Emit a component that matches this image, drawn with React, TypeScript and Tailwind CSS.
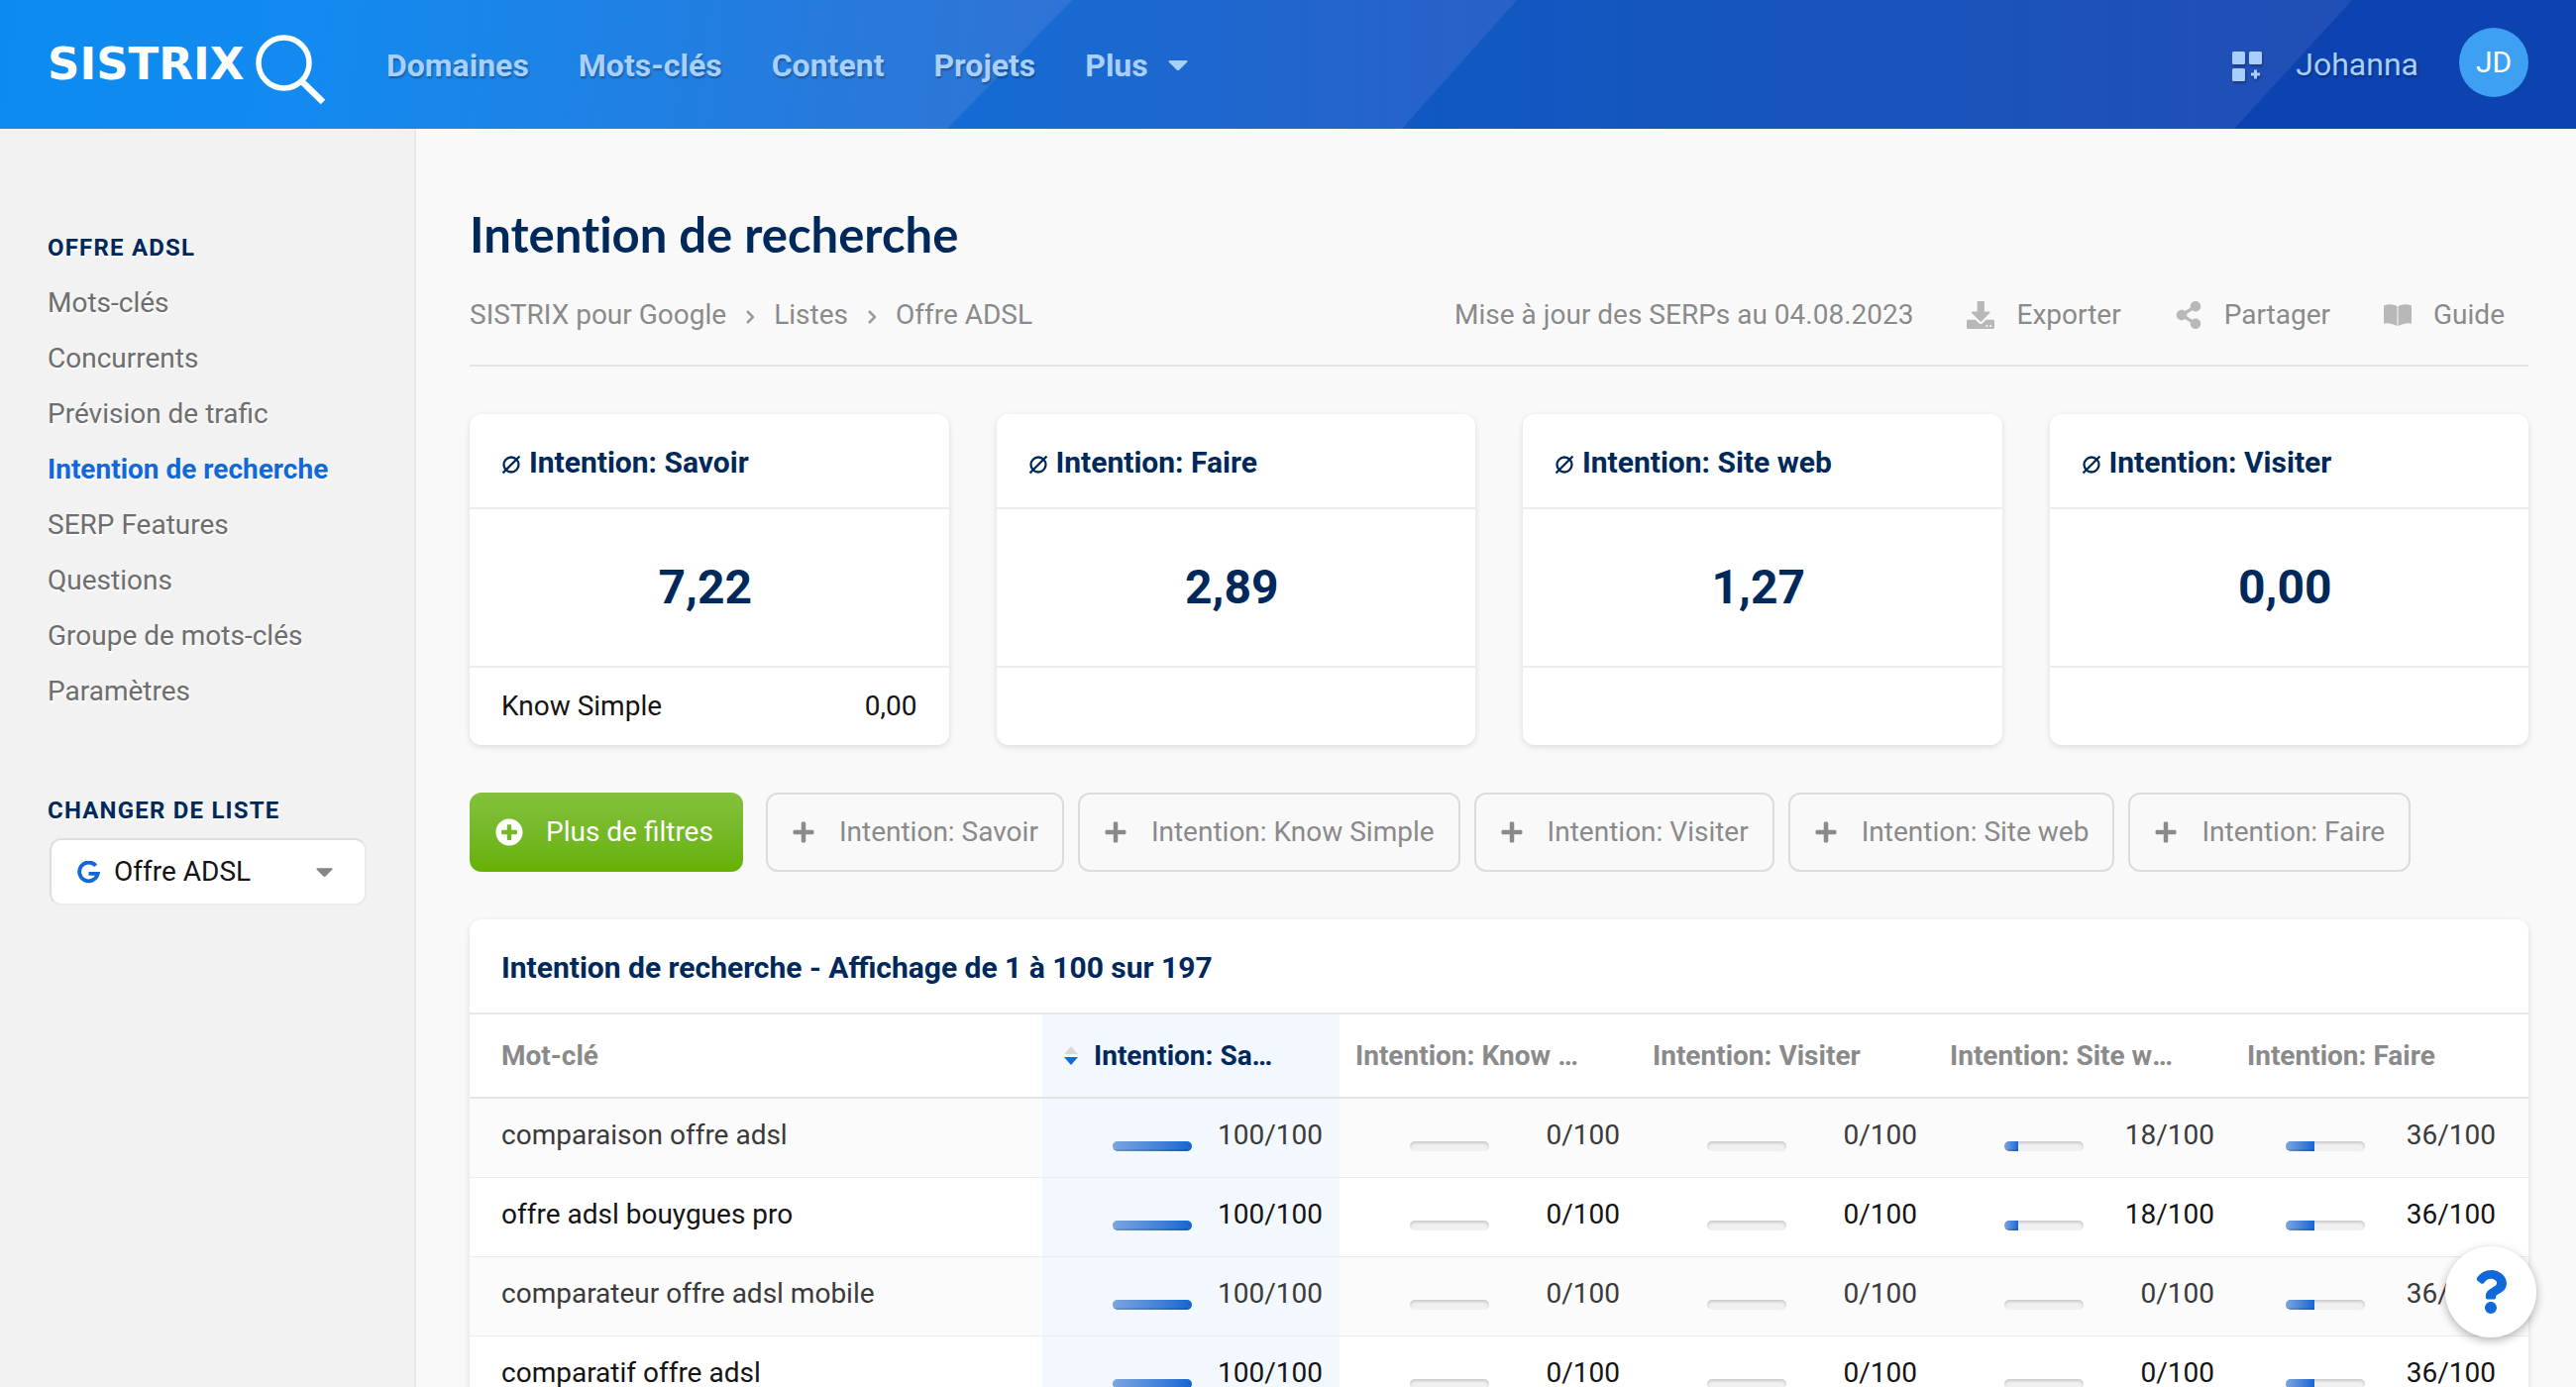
import { FaShareAlt, FaPlusCircle, FaPlus, FaQuestion } from 'react-icons/fa'

const nav = ['Domaines', 'Mots-clés', 'Content', 'Projets']
const side = ['Mots-clés', 'Concurrents', 'Prévision de trafic', 'Intention de recherche', 'SERP Features', 'Questions', 'Groupe de mots-clés', 'Paramètres']
const cards = [
  { title: 'Intention: Savoir', value: '7,22', label: 'Know Simple', extra: '0,00' },
  { title: 'Intention: Faire', value: '2,89' },
  { title: 'Intention: Site web', value: '1,27' },
  { title: 'Intention: Visiter', value: '0,00' },
]
const filters = ['Savoir', 'Know Simple', 'Visiter', 'Site web', 'Faire']
const columns = ['Intention: Know Simple', 'Intention: Visiter', 'Intention: Site web', 'Intention: Faire']
const rows: { keyword: string; scores: number[] }[] = [
  { keyword: 'comparaison offre adsl', scores: [100, 0, 0, 18, 36] },
  { keyword: 'offre adsl bouygues pro', scores: [100, 0, 0, 18, 36] },
  { keyword: 'comparateur offre adsl mobile', scores: [100, 0, 0, 0, 36] },
  { keyword: 'comparatif offre adsl', scores: [100, 0, 0, 0, 36] },
]

function Caret({ className }: { className: string }) {
  return (
    <svg viewBox="0 0 20 10" className={className} fill="currentColor" aria-hidden="true">
      <path d="M1.5 0h17a1 1 0 0 1 .7 1.7l-7.6 7.6a2.2 2.2 0 0 1-3.2 0L.8 1.7A1 1 0 0 1 1.5 0z" />
    </svg>
  )
}

function Logo() {
  return (
    <a href="#" aria-label="SISTRIX" className="flex w-[294px] items-center gap-3 text-white">
      <span className="font-['DejaVu_Sans',sans-serif] text-[45px] leading-[64px] font-bold">SISTRIX</span>
      <svg viewBox="0 0 72 72" className="mt-3 h-[72px] w-[72px] shrink-0" fill="none" stroke="currentColor" aria-hidden="true">
        <circle cx="28.5" cy="28.5" r="25.5" strokeWidth="5.5" />
        <path d="M46.5 47l21.5 21" strokeWidth="6.5" />
      </svg>
    </a>
  )
}

function Header() {
  return (
    <header className="relative isolate flex h-[130px] items-center overflow-hidden bg-[#0d42b1] pr-12 pl-12 text-[#a9cffc]">
      <svg viewBox="0 0 2600 130" preserveAspectRatio="none" className="absolute inset-0 -z-10 h-full w-full" aria-hidden="true">
        <defs>
          <linearGradient id="near" gradientUnits="userSpaceOnUse" x1="0" y1="0" x2="1050" y2="130">
            <stop offset="0" stopColor="#0b8bf0" />
            <stop offset="0.3" stopColor="#138af0" />
            <stop offset="1" stopColor="#2f74d4" />
          </linearGradient>
          <linearGradient id="middle" gradientUnits="userSpaceOnUse" x1="950" y1="0" x2="1500" y2="0">
            <stop offset="0" stopColor="#146cd4" />
            <stop offset="1" stopColor="#2862c8" />
          </linearGradient>
          <linearGradient id="far" gradientUnits="userSpaceOnUse" x1="1420" y1="0" x2="2350" y2="0">
            <stop offset="0" stopColor="#1059c2" />
            <stop offset="1" stopColor="#214fb6" />
          </linearGradient>
        </defs>
        <path fill="#0d42b1" d="M0 0h2600v130H0z" />
        <path fill="url(#far)" d="M0 0h2374l-119 130H0z" />
        <path fill="url(#middle)" d="M0 0h1531l-116 130H0z" />
        <path fill="url(#near)" d="M0 0h1082L956 130H0z" />
      </svg>
      <Logo />
      <nav aria-label="Principal" className="mt-0.5 ml-12 flex items-center gap-[50px] text-[32px] leading-10 font-bold [text-shadow:1px_2px_2px_rgba(0,0,0,0.3)]">
        {nav.map((n) => (
          <a key={n} href="#">{n}</a>
        ))}
        <button type="button" className="flex items-center gap-5">
          Plus
          <Caret className="h-[10px] w-5" />
        </button>
      </nav>
      <div className="ml-auto flex items-center">
        <button type="button" aria-label="Applications" className="mt-1 mr-[34px]">
          <svg viewBox="0 0 30 30" className="h-[30px] w-[30px] drop-shadow-[1px_2px_1px_rgba(0,0,0,0.3)]" fill="currentColor" aria-hidden="true">
            <rect width="13" height="13" rx="1.5" />
            <rect x="17" width="13" height="13" rx="1.5" />
            <rect y="17" width="13" height="13" rx="1.5" />
            <path d="M22 18.5h3v3h3v3h-3v3h-3v-3h-3v-3h3z" />
          </svg>
        </button>
        <a href="#" className="mr-[41px] text-[32px] leading-10 [text-shadow:1px_2px_2px_rgba(0,0,0,0.3)]">Johanna</a>
        <button type="button" className="mb-1 h-[70px] w-[70px] rounded-full bg-[#3ea0f2] text-[30px] leading-[68px] text-white">JD</button>
      </div>
    </header>
  )
}

function Sidebar() {
  return (
    <aside className="w-[420px] shrink-0 border-r-2 border-[#e8e8e8] bg-[#f2f2f2] px-12 pt-[100px] [text-shadow:1px_2px_0_#fff]">
      <h2 className="mb-2 text-2xl leading-10 font-bold tracking-wider text-[#00295b]">OFFRE ADSL</h2>
      <ul className="text-[28px] leading-[56px] text-[#6e6e6e]">
        {side.map((s) => (
          <li key={s}>
            <a href="#" className={s === 'Intention de recherche' ? 'font-bold text-[#1168d8]' : ''}>{s}</a>
          </li>
        ))}
      </ul>
      <label htmlFor="list" className="mt-16 block text-2xl leading-[56px] font-bold tracking-wider text-[#00295b]">CHANGER DE LISTE</label>
      <div className="ml-0.5 flex h-[68px] items-center rounded-xl border-2 border-[#ebebeb] border-t-[#dedede] border-l-[#dedede] bg-white pr-8 pl-[26px] [text-shadow:none]">
        <svg viewBox="0 0 24 24" className="h-[23px] w-[23px] shrink-0" fill="none" stroke="#1168d8" strokeWidth="4" aria-hidden="true">
          <path d="M19.5 5A9.8 9.8 0 1 0 21.6 13.5H12" />
        </svg>
        <select id="list" className="min-w-0 flex-1 appearance-none bg-transparent pl-[14px] text-[28px] leading-10 text-[#141414]">
          <option>Offre ADSL</option>
        </select>
        <Caret className="h-[9px] w-[17px] text-[#858585]" />
      </div>
    </aside>
  )
}

function PageHead() {
  const actions = [
    {
      label: 'Exporter',
      icon: (
        <svg viewBox="0 0 29 29" className="h-7 w-7" fill="#b8b8b8" aria-hidden="true">
          <path d="M12 0h5.5a1 1 0 0 1 1 1v10h5c1 0 1.2.8.6 1.400l-8.400 8.500a1.300 1.300 0 0 1-1.900 0l-8.400-8.500C4.800 11.800 5 11 6 11h5V1a1 1 0 0 1 1-1z" />
          <path fillRule="evenodd" d="M1.200 19.500h8l3 3a3.500 3.500 0 0 0 5 0l3-3h7.600a1.200 1.200 0 0 1 1.200 1.200v7.100a1.200 1.200 0 0 1-1.200 1.200H1.200A1.200 1.200 0 0 1 0 27.800v-7.100a1.200 1.200 0 0 1 1.200-1.200zM20 25v2h2v-2zm4 0v2h2v-2z" />
        </svg>
      ),
    },
    { label: 'Partager', icon: <FaShareAlt className="h-7 w-7 text-[#b8b8b8]" /> },
    {
      label: 'Guide',
      icon: (
        <svg viewBox="0 0 28 22" className="h-[22px] w-7" fill="#b8b8b8" aria-hidden="true">
          <path d="M0 1.500Q7-1 13.500 2v20Q7 18.500 0 19.500zM28 1.500Q21-1 14.500 2v20q6.500-3.500 13.500-2.500z" />
        </svg>
      ),
    },
  ]
  return (
    <>
      <h1 className="font-['Lato',sans-serif] text-[49px] leading-[60px] font-bold text-[#00295b] [font-variant-ligatures:none]">Intention de recherche</h1>
      <div className="mt-8 flex items-center justify-between border-b-2 border-[#e4e4e4] pb-[30px] text-[28px] leading-10 text-[#8a8a8a]">
        <nav aria-label="Fil d’Ariane" className="flex items-center gap-5">
          {['SISTRIX pour Google', 'Listes', 'Offre ADSL'].map((c, i) => (
            <span key={c} className="flex items-center gap-5">
              {i > 0 && (
                <svg viewBox="0 0 8 14" className="mt-1 h-[14px] w-2" fill="none" stroke="#9a9a9a" strokeWidth="2.5" aria-hidden="true">
                  <path d="M1 1l6 6-6 6" />
                </svg>
              )}
              <a href="#">{c}</a>
            </span>
          ))}
        </nav>
        <div className="flex items-center gap-[54px] pr-6 [text-shadow:1px_2px_0_#fff]">
          <span>Mise à jour des SERPs au 04.08.2023</span>
          {actions.map((a) => (
            <button key={a.label} type="button" className="flex items-center gap-[22px]">
              {a.icon}
              {a.label}
            </button>
          ))}
        </div>
      </div>
    </>
  )
}

function Cards() {
  return (
    <section className="mt-12 grid grid-cols-4 gap-12">
      {cards.map((c) => (
        <article key={c.title} className="rounded-xl bg-white shadow-[0_2px_6px_rgba(0,0,0,0.12)]">
          <h2 className="flex h-24 items-center gap-2 border-b-2 border-[#ececec] px-8 pt-1 text-[30px] leading-10 font-bold text-[#00295b]">
            <svg viewBox="0 0 20 20" className="mt-1 h-5 w-5" fill="none" stroke="currentColor" strokeWidth="2.3" aria-hidden="true">
              <circle cx="10" cy="10" r="7.5" />
              <path d="M1.5 18.5l17-17" />
            </svg>
            {c.title}
          </h2>
          <p className="flex h-40 items-center justify-center border-b-2 border-[#ececec] pr-2 text-5xl font-bold text-[#00295b]">{c.value}</p>
          <div className="flex h-[78px] items-center justify-between px-8 text-[28px] leading-10 text-[#141414]">
            <span>{c.label}</span>
            <span>{c.extra}</span>
          </div>
        </article>
      ))}
    </section>
  )
}

function Filters() {
  return (
    <section className="mt-12 flex gap-[14px] text-[28px] leading-10 text-[#8a8a8a]">
      <button type="button" className="mr-[9px] flex h-20 items-center gap-[23px] rounded-xl bg-linear-to-b from-[#84c03c] to-[#66b100] pr-[30px] pl-[26px] text-white">
        <FaPlusCircle className="h-7 w-7" />
        Plus de filtres
      </button>
      {filters.map((f) => (
        <button key={f} type="button" className="flex h-20 items-center gap-6 rounded-xl border-2 border-[#dcdcdc] px-6">
          <FaPlus className="h-6 w-6" />
          Intention: {f}
        </button>
      ))}
    </section>
  )
}

function Bar({ value }: { value: number }) {
  return (
    <span className="mt-[22px] block h-[10px] w-20 overflow-hidden rounded-[5px] bg-[#f0f0f0] shadow-[inset_0_2px_3px_rgba(0,0,0,0.16)]">
      <span
        className="block h-full bg-linear-to-r from-[#7ba6e0] to-[#1265d4] shadow-[inset_0_-2px_0_rgba(0,0,0,0.12)]"
        style={{ width: value + '%' }}
      />
    </span>
  )
}

function KeywordTable() {
  return (
    <section className="mt-12 rounded-t-xl bg-white shadow-[0_2px_6px_rgba(0,0,0,0.12)]">
      <h2 className="flex h-24 items-center border-b-2 border-[#e8e8e8] px-8 pt-1 text-[30px] leading-10 font-bold text-[#00295b]">
        Intention de recherche - Affichage de 1 à 100 sur 197
      </h2>
      <table className="w-full table-fixed border-collapse text-[28px] leading-10">
        <colgroup>
          <col />
          <col className="w-[300px]" />
          <col className="w-[300px]" />
          <col className="w-[300px]" />
          <col className="w-[300px]" />
          <col className="w-[300px]" />
        </colgroup>
        <thead>
          <tr className="h-[84px] border-b-2 border-[#e4e4e4] text-left text-[#8a8a8a]">
            <th className="px-8">Mot-clé</th>
            <th className="bg-[#f3f8ff] pr-16 pl-[22px] text-[#00295b]">
              <div className="flex items-center gap-4">
                <svg viewBox="0 0 14 19" className="h-[19px] w-[14px] shrink-0" aria-hidden="true">
                  <path fill="#d8d8d8" d="M7 0l7 8H0z" />
                  <path fill="#1168d8" d="M0 11h14l-7 8z" />
                </svg>
                <span className="truncate">Intention: Savoir</span>
              </div>
            </th>
            {columns.map((c) => (
              <th key={c} className="truncate pr-[54px] pl-4">{c}</th>
            ))}
          </tr>
        </thead>
        <tbody>
          {rows.map((r) => (
            <tr key={r.keyword} className="h-20 border-b border-[#ebebeb] text-[#141414] odd:bg-[#fbfbfb] odd:text-[#3a3a3a]">
              <td className="truncate px-8 pb-1">{r.keyword}</td>
              {r.scores.map((s, i) => (
                <td key={i} className={i === 0 ? 'bg-[#f3f8ff] pr-[17px] pb-1' : i === 4 ? 'pr-[33px] pb-1' : 'pr-[17px] pb-1'}>
                  <div className="flex h-10 items-center justify-end">
                    <Bar value={s} />
                    <span className="w-[132px] text-right">{s}/100</span>
                  </div>
                </td>
              ))}
            </tr>
          ))}
        </tbody>
      </table>
    </section>
  )
}

export default function App() {
  return (
    <div className="flex h-screen flex-col overflow-hidden bg-[#f9f9f9] font-['Roboto',sans-serif]">
      <Header />
      <div className="flex min-h-0 flex-1">
        <Sidebar />
        <main className="min-w-0 flex-1 px-12 pt-[76px] pl-[54px]">
          <PageHead />
          <Cards />
          <Filters />
          <KeywordTable />
        </main>
      </div>
      <button type="button" aria-label="Aide" className="fixed right-10 bottom-[50px] flex h-[92px] w-[92px] items-center justify-center rounded-full bg-white text-[#1168d8] shadow-[0_3px_10px_rgba(0,0,0,0.3)]">
        <FaQuestion className="h-11 w-11" />
      </button>
    </div>
  )
}
